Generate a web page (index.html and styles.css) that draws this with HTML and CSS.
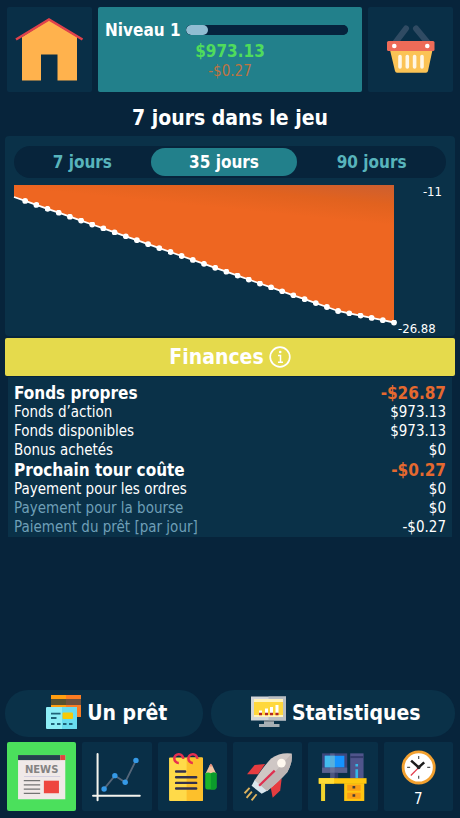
FILE: index.html
```
<!DOCTYPE html>
<html lang="fr">
<head>
    <meta charset="UTF-8" />
    <meta name="viewport" content="width=device-width, initial-scale=1" />
    <title>Finances</title>
    <link rel="stylesheet" href="styles.css">
</head>
<body>

    <header class="topbar">
        <button class="tile" aria-label="Maison">
            <svg viewBox="0 0 85 85">
                <path d="M15 30 42 13 70 30V73.5H50.5V47.5H34V73.5H15Z" fill="#ffb24d"/>
                <path d="M9 32.5 42 12.5 75.5 32.5" fill="none" stroke="#e0414b" stroke-width="2.6"/>
            </svg>
        </button>
        <div class="status">
            <div class="level">
                <label for="level">Niveau 1</label>
                <progress id="level" value="14" max="100"></progress>
            </div>
            <div class="money">$973.13</div>
            <div class="change">-$0.27</div>
        </div>
        <button class="tile" aria-label="Boutique">
            <svg viewBox="0 0 85 85">
                <path d="M38 21.5 27 36M48 21.5 60 36" stroke="#304b63" stroke-width="6" stroke-linecap="round"/>
                <path d="M22 43H64.5L60 64Q59.600 65.700 58 65.700H29Q27.400 65.700 27 64Z" fill="#fbc355"/>
                <rect x="19" y="34" width="47.500" height="10" rx="1.500" fill="#ee6b58"/>
                <circle cx="26.300" cy="39" r="2.300" fill="#fff"/>
                <circle cx="59.300" cy="39" r="2.300" fill="#fff"/>
                <path d="M32 49.500V60M39.300 49.500V60M46.600 49.500V60M54 49.500V60" stroke="#fff6e4" stroke-width="3.600" stroke-linecap="round"/>
            </svg>
        </button>
    </header>

    <h1>7 jours dans le jeu</h1>

    <section class="panel">
        <div class="tabs">
            <button>7 jours</button>
            <button class="active">35 jours</button>
            <button>90 jours</button>
        </div>
        <div class="chart">
            <svg viewBox="0 0 380 151">
                <defs>
                    <linearGradient id="fade" gradientUnits="userSpaceOnUse" x1="380" y1="0" x2="376" y2="40">
                        <stop offset="0" stop-color="#cc5f30"/>
                        <stop offset="0.5" stop-color="#e1621f"/>
                        <stop offset="1" stop-color="#ee6621"/>
                    </linearGradient>
                    <marker id="dot" viewBox="0 0 6 6" refX="3" refY="3" markerWidth="6" markerHeight="6" markerUnits="userSpaceOnUse">
                        <circle cx="3" cy="3" r="2.900" fill="#fff"/>
                    </marker>
                </defs>
                <path d="M0 0H380V137.500L324 126 0 12Z" fill="url(#fade)"/>
                <polyline fill="none" stroke="#fff" stroke-width="1.800" marker-mid="url(#dot)" marker-end="url(#dot)" points="0,12 11.200,15.900 22.400,19.900 33.500,23.800 44.700,27.700 55.900,31.700 67.100,35.600 78.200,39.500 89.400,43.400 100.600,47.400 111.800,51.300 122.900,55.200 134.100,59.200 145.300,63.100 156.500,67 167.600,71 178.800,74.900 190,78.800 201.200,82.800 212.400,86.700 223.500,90.600 234.700,94.500 245.900,98.500 257.100,102.400 268.200,106.300 279.400,110.300 290.600,114.200 301.800,118.100 312.900,122 324.100,126 335.300,128.300 346.500,130.600 357.600,132.900 368.800,135.200 380,137.500"/>
            </svg>
            <div class="axis">
                <span class="axis-top">-11</span>
                <span>-26.88</span>
            </div>
        </div>
    </section>

    <button class="finances">
        Finances
        <svg viewBox="0 0 22 22" width="22" height="22">
            <circle cx="11" cy="11" r="9.800" fill="none" stroke="#fff" stroke-width="1.700"/>
            <path d="M9 9.500H11.500V16M9 16.200H14" fill="none" stroke="#fff" stroke-width="1.500"/>
            <circle cx="11.200" cy="6" r="1.300" fill="#fff"/>
        </svg>
    </button>

    <div class="details">
        <table>
            <tr class="total"><th>Fonds propres</th><td>-$26.87</td></tr>
            <tr><th>Fonds d’action</th><td>$973.13</td></tr>
            <tr><th>Fonds disponibles</th><td>$973.13</td></tr>
            <tr><th>Bonus achetés</th><td>$0</td></tr>
            <tr class="total"><th>Prochain tour coûte</th><td>-$0.27</td></tr>
            <tr><th>Payement pour les ordres</th><td>$0</td></tr>
            <tr class="muted"><th>Payement pour la bourse</th><td>$0</td></tr>
            <tr class="muted"><th>Paiement du prêt [par jour]</th><td>-$0.27</td></tr>
        </table>
    </div>

    <div class="actions">
        <button class="loan">
            <svg viewBox="0 0 36 36" width="36" height="36">
                <path d="M5 0H20V22H5Z" fill="#ff9f10"/>
                <path d="M20 0H35V22H20Z" fill="#fa7d22"/>
                <path d="M5 4H20V10H5Z" fill="#58512f"/>
                <path d="M20 4H35V10H20Z" fill="#6e513d"/>
                <rect y="12" width="31" height="22" rx="1" fill="#8eeef6"/>
                <path d="M16 12H30Q31 12 31 13V33Q31 34 30 34H16Z" fill="#68dcee"/>
                <rect x="16.500" y="17.500" width="10.500" height="6.500" rx="1" fill="#f6ca08"/>
                <path d="M5 18.700H14.500M5 23H10.500M5 29H8.500M11 29H14.500M17 29H20.500M23 29H26.500" stroke="#1f6278" stroke-width="1.800"/>
            </svg>
            Un prêt
        </button>
        <button class="stats">
            <svg viewBox="0 0 36 36" width="36" height="36">
                <rect y="1.500" width="35" height="24" fill="#d3d7d9"/>
                <path d="M17.500 1.500H35V25.500H17.500Z" fill="#b9bfc3"/>
                <rect x="3" y="4" width="29" height="18" fill="#fff3bb"/>
                <rect x="3" y="7" width="29" height="13" fill="#ffd83d"/>
                <path d="M9.500 18V15.500M15.500 18V13.500M20.500 18V12M26 18V10" stroke="#fff" stroke-width="3"/>
                <path d="M8 19H11M14 19H17M19 19H22M24.500 19H27.500" stroke="#b12723" stroke-width="2.500"/>
                <path d="M13 25.500H23V29H28.500V32H8V29H13Z" fill="#a8afb4"/>
                <path d="M13 25.500H23V27H13Z" fill="#7c858b"/>
            </svg>
            Statistiques
        </button>
    </div>

    <nav class="menu">
        <button class="tile active" aria-label="Nouvelles">
            <svg viewBox="0 0 69 69">
                <rect x="11" y="13" width="47" height="44" fill="#f0e9e8"/>
                <rect x="11" y="13" width="42" height="5" fill="#24434d"/>
                <rect x="53" y="13" width="5" height="5" fill="#df453f"/>
                <text x="34.500" y="30.700" class="news">NEWS</text>
                <path d="M17 34.300H53" stroke="#d3cfdf"/>
                <path d="M16.700 38.500H33M16.700 42.700H33M16.700 46.900H33M16.700 51.100H33" stroke="#737373" stroke-width="1.300"/>
                <rect x="36.700" y="38.500" width="15" height="12.500" fill="#ee463f"/>
            </svg>
        </button>
        <button class="tile" aria-label="Bourse">
            <svg viewBox="0 0 69 69">
                <path d="M15.500 12V58M11 53.500H57.500" stroke="#f4f4ee" stroke-width="2" stroke-linecap="round"/>
                <path d="M22 46.700 32.700 33.500 43 40 53.700 18.300" fill="none" stroke="#56677a" stroke-width="1.800"/>
                <g fill="#3599e6">
                    <circle cx="22" cy="46.700" r="2.700"/>
                    <circle cx="32.700" cy="33.500" r="2.700"/>
                    <circle cx="43" cy="40" r="2.700"/>
                    <circle cx="53.700" cy="18.300" r="2.700"/>
                </g>
            </svg>
        </button>
        <button class="tile" aria-label="Ordres">
            <svg viewBox="0 0 69 69">
                <rect x="11" y="15.300" width="33.700" height="43.300" rx="1" fill="#ffda49"/>
                <path d="M28.500 15.300H43.700Q44.700 15.300 44.700 16.300V57.600Q44.700 58.600 43.700 58.600H28.500Z" fill="#fdc02b"/>
                <path d="M20.700 20.900A4.400 4.400 0 1 1 25 16.800M34.700 20.900A4.400 4.400 0 1 1 39 16.800" fill="none" stroke="#e8304f" stroke-width="2.500"/>
                <path d="M18 29.400H27M18 35.100H38M18 40.700H38M18 46.300H38" stroke="#33304d" stroke-width="2.400" stroke-linecap="round"/>
                <path d="M47 32 51.300 23.500Q52.600 21 54 23.500L58.200 32Z" fill="#f4c4a2"/>
                <path d="M50.800 24.500 52.600 21.500 54.500 24.500Z" fill="#e98c7b"/>
                <path d="M47 31Q50 29.500 52.600 31 55.500 29.500 58.200 31V45Q58.200 47.300 56 47.300H49.200Q47 47.300 47 45Z" fill="#1cb52a"/>
                <path d="M52.600 31Q55.500 29.500 58.200 31V45Q58.200 47.300 56 47.300H52.600Z" fill="#0b9b2b"/>
            </svg>
        </button>
        <button class="tile" aria-label="Bonus">
            <svg viewBox="0 0 69 69">
                <path d="M32 22 21.500 22.800 14 32 25 32Z" fill="#e63c40"/>
                <path d="M48.500 36 47 48.300 39.500 55.500 37.500 45Z" fill="#e63c40"/>
                <path d="M22 37 18.500 43.500 28.500 51.500 35 48Z" fill="#d9e6ee"/>
                <path d="M58.300 11.500Q47 10 38 16.500 30.500 24 21.500 38L34 48.700Q46 39 54 30 59.500 21 58.300 11.500Z" fill="#cfc7c5"/>
                <path d="M58.300 11.500Q59.500 21 54 30 46 39 34 48.700L28 43.500Q45 27 58.300 11.500Z" fill="#beb5b4"/>
                <circle cx="48.200" cy="21" r="4.300" fill="#fff8ef"/>
                <path d="M26 43.500 41.500 28.500" stroke="#de2f50" stroke-width="2.300"/>
                <path d="M16.500 45.700 11.500 51M18.800 49.500 13.500 55.500M23.500 52 18.500 58" stroke="#ddb25e" stroke-width="1.900"/>
            </svg>
        </button>
        <button class="tile" aria-label="Bureau">
            <svg viewBox="0 0 69 69">
                <rect x="14" y="11.300" width="25" height="19.400" fill="#3e477c"/>
                <rect x="16.700" y="13.700" width="19.500" height="11.600" fill="#1593ff"/>
                <rect x="16.700" y="13.700" width="10" height="11.600" fill="#43bbed"/>
                <path d="M14 25.500H39V30.700H14Z" fill="#59628f"/>
                <rect x="22" y="30.700" width="8" height="5.500" fill="#303c69"/>
                <rect x="22" y="11.300" width="4.500" height="25" fill="#8d94b4" opacity="0.300"/>
                <rect x="42" y="11.300" width="13.300" height="25" fill="#50558c"/>
                <path d="M42 15H55.300" stroke="#343b6d" stroke-width="2"/>
                <path d="M48.500 22V24.500M48.500 27V36" stroke="#36b6e6" stroke-width="2.600"/>
                <path d="M13 41H17V58.700H13Z" fill="#f1d42d"/>
                <rect x="36" y="41" width="20" height="17.700" fill="#ffc511"/>
                <rect x="39" y="42.500" width="13.500" height="6" fill="#fa9e16"/>
                <rect x="39" y="50.500" width="13.500" height="6" fill="#fa9e16"/>
                <rect x="10.700" y="36" width="47.600" height="5.500" fill="#ffc80f"/>
                <path d="M10.700 36H26V41.500H10.700Z" fill="#ffdc36"/>
                <path d="M44.300 45H47M44.300 53.300H47" stroke="#4a3d35" stroke-width="2.500"/>
            </svg>
        </button>
        <button class="tile clock" aria-label="Tour 7">
            <svg viewBox="0 0 69 46">
                <circle cx="34.500" cy="25.300" r="15.500" fill="#fff" stroke="#f2a02f" stroke-width="2.800"/>
                <path d="M34.500 14V17M34.500 33.700V36.700M23 25.300H26M43 25.300H46" stroke="#555" stroke-width="1.200"/>
                <path d="M34.500 25.300 27 18.500M34.500 25.300 40 20.300" stroke="#1c1c1c" stroke-width="2.500"/>
                <path d="M35 25 26.700 33.300" stroke="#e33b4b" stroke-width="1.300"/>
                <circle cx="34.500" cy="25.300" r="1.800" fill="#222"/>
            </svg>
            <span>7</span>
        </button>
    </nav>

</body>
</html>
```
FILE: styles.css
```
* { box-sizing: border-box; }
body {
    display: flex; flex-direction: column;
    min-height: 100vh; margin: 0; padding: 7px 5px;
    background: #07243b; color: #fff;
    font-family: "DejaVu Sans Condensed", "DejaVu Sans", sans-serif;
    font-stretch: condensed; font-size: 15px;
}
button { border: none; padding: 0; font: inherit; color: inherit; background: none; cursor: pointer; }
svg { display: block; }

.tile { background: #092f47; border-radius: 2px; }
.tile svg { width: 100%; }

.topbar { display: grid; grid-template-columns: 85px 1fr 85px; gap: 6px; padding: 0 2px; }
.status { padding-top: 12px; background: #22808b; border-radius: 2px; text-align: center; line-height: 20px; }
.level { display: flex; align-items: center; gap: 5px; height: 22px; padding: 0 14px 0 7px; font-size: 17px; font-weight: bold; }
progress { -webkit-appearance: none; appearance: none; flex: 1; min-width: 0; height: 10px; border: none; border-radius: 5px; background: #06233d; overflow: hidden; }
progress::-webkit-progress-bar { background: #06233d; border-radius: 5px; }
progress::-webkit-progress-value { background: #91bdd2; border-radius: 5px; }
.money { color: #4fdc5c; font-size: 17px; font-weight: bold; }
.change { color: #bd7443; }

h1 { margin: 12px 0 4px; font-size: 21px; line-height: 28px; text-align: center; }

.panel { padding: 10px 9px 0; background: #0a3148; border-radius: 4px; }
.tabs { display: grid; grid-template-columns: 137fr 147fr 149fr; padding: 2px 0; border-radius: 16px; background: #07243b; }
.tabs button { height: 28px; border-radius: 14px; color: #58b4bc; font-size: 17px; font-weight: bold; }
.tabs .active { background: #22808b; color: #fff; }
.chart { display: flex; margin-top: 7px; }
.chart svg { flex: 1; min-width: 0; overflow: visible; }
.axis { display: flex; flex-direction: column; justify-content: space-between; width: 52px; padding-left: 4px; font-size: 13px; line-height: 14px; }
.axis-top { padding-right: 4px; text-align: right; }

.finances {
    display: flex; align-items: center; justify-content: center; gap: 5px;
    height: 38px; margin-top: 2px; border-radius: 2px;
    background: #e5da4c; font-size: 21px; font-weight: bold;
}

.details { margin: 1px 3px 20px; padding: 6px 6px 0; background: #0a3148; }
table { width: 100%; border-collapse: collapse; line-height: 19px; }
th, td { padding: 0; font-weight: normal; text-align: left; }
td { text-align: right; }
.total { line-height: 20px; }
.total th, .total td { font-size: 17px; font-weight: bold; }
.total td { color: #e5692f; }
.muted th { color: #6e9fb7; }

.actions { display: grid; grid-template-columns: 198fr 245fr; gap: 8px; margin-top: auto; }
.actions button {
    display: flex; align-items: center; justify-content: center; gap: 5px;
    height: 47px; padding-left: 6px; border-radius: 23px;
    background: #0a3148; font-size: 21px; font-weight: bold;
}

.menu { display: grid; grid-template-columns: repeat(6, 1fr); gap: 6px; margin-top: 5px; padding: 0 2px; }
.menu .active { background: #4be05c; }
.clock { display: flex; flex-direction: column; align-items: center; }
.clock span { line-height: 23px; }
.news { fill: #858383; font: bold 10px "DejaVu Sans", sans-serif; text-anchor: middle; }
```
